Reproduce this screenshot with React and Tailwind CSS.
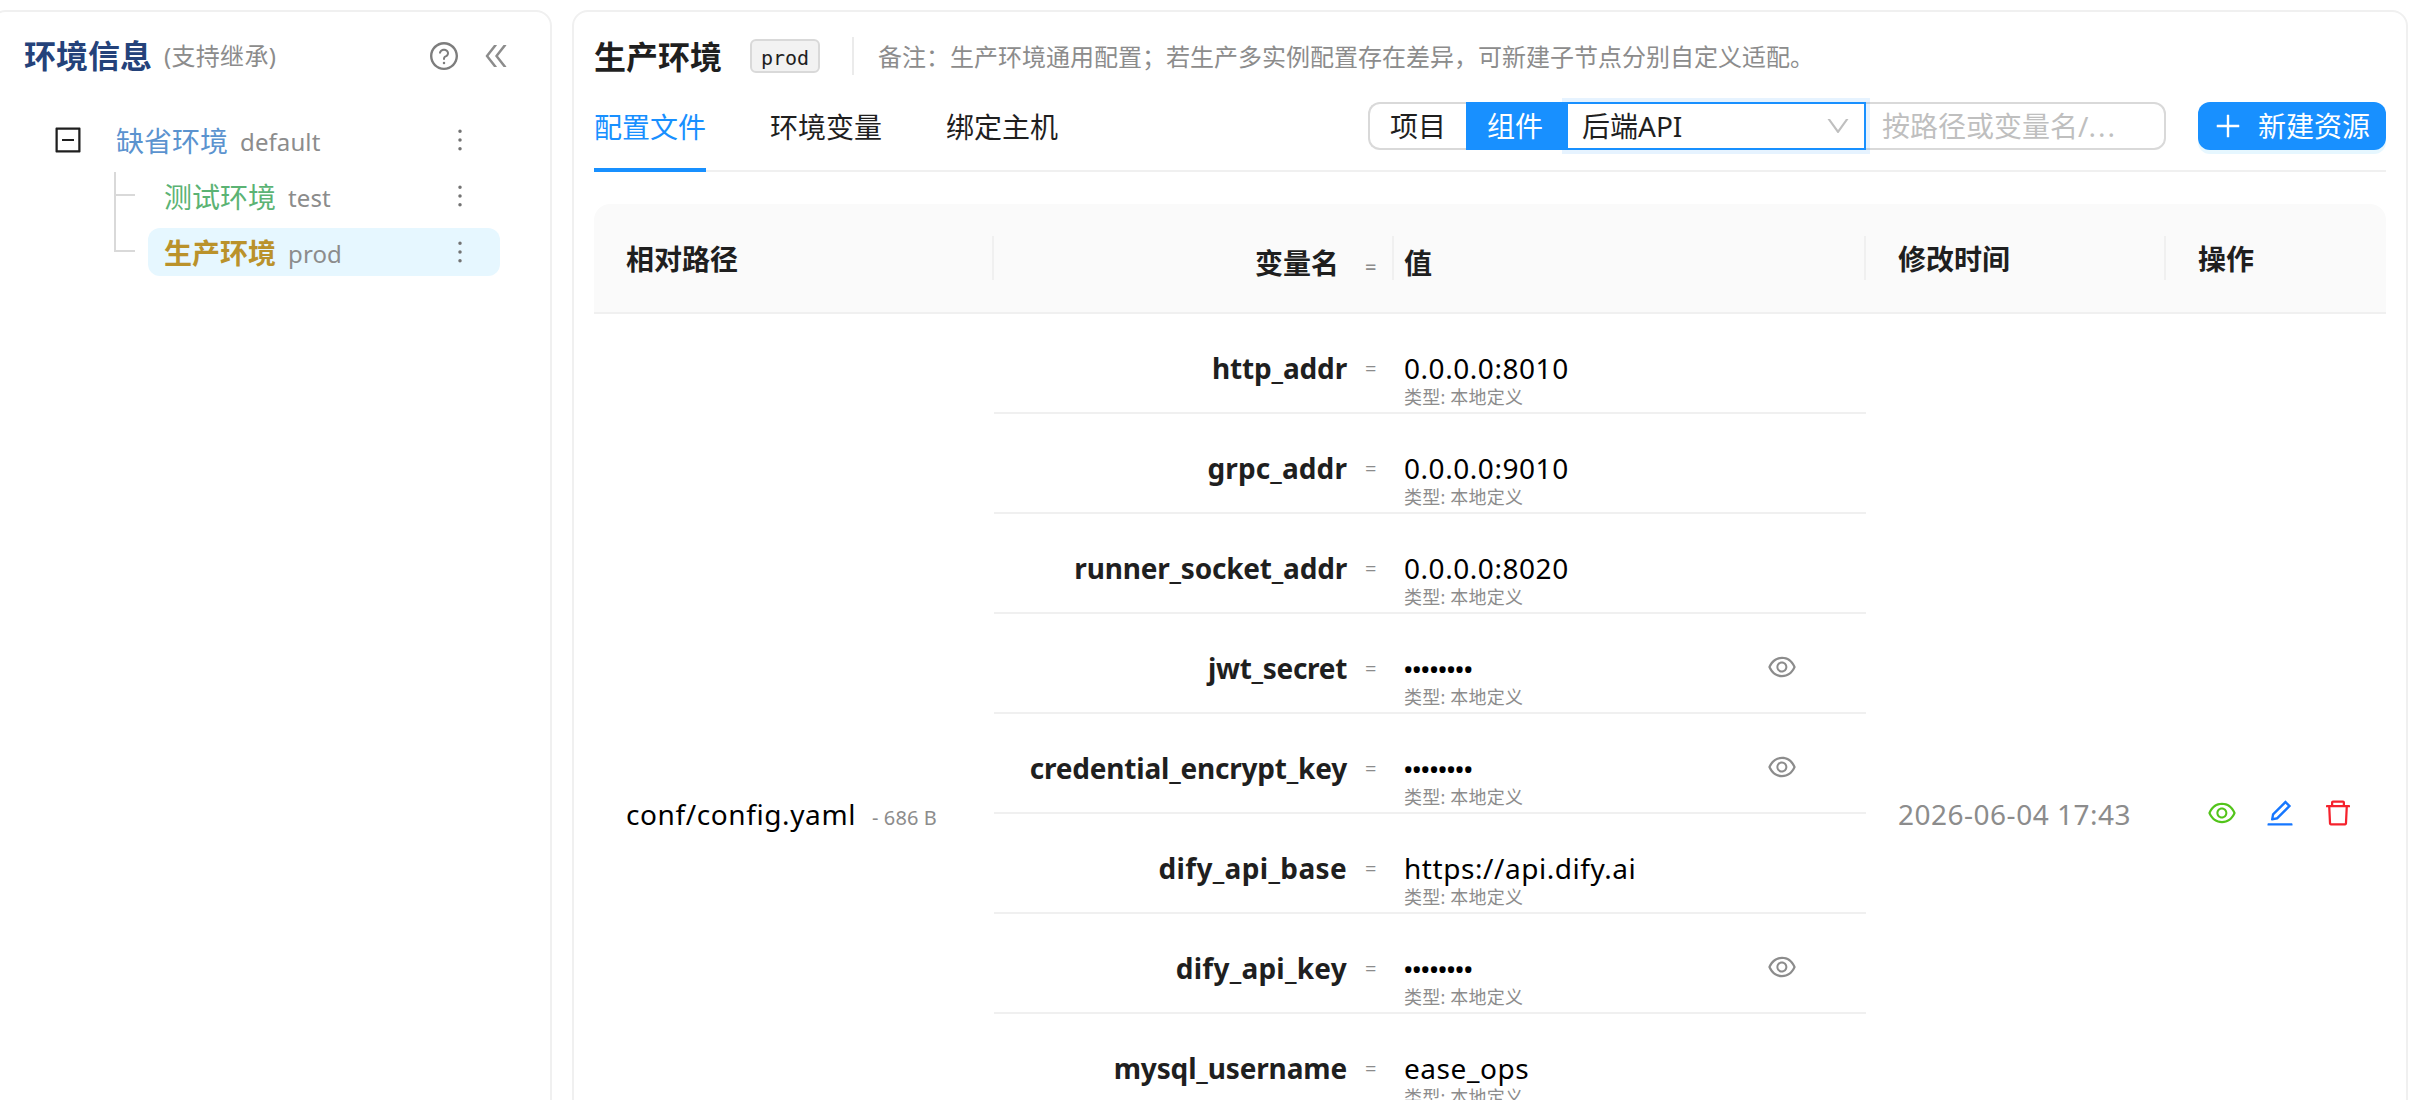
import React from 'react';
import {
  AiOutlineQuestionCircle,
  AiOutlineDoubleLeft,
  AiOutlineMinusSquare,
  AiOutlineMore,
  AiOutlineDown,
  AiOutlinePlus,
  AiOutlineEye,
  AiOutlineEdit,
  AiOutlineDelete,
} from 'react-icons/ai';

const variables = [
  { name: 'http_addr', value: '0.0.0.0:8010', tracking: 'tracking-[-0.15px]' },
  { name: 'grpc_addr', value: '0.0.0.0:9010', tracking: 'tracking-[0.1px]' },
  { name: 'runner_socket_addr', value: '0.0.0.0:8020', tracking: 'tracking-[-0.2px]' },
  { name: 'jwt_secret', secret: true, tracking: 'tracking-[-0.3px]' },
  { name: 'credential_encrypt_key', secret: true, tracking: 'tracking-[-0.2px]' },
  { name: 'dify_api_base', value: 'https://api.dify.ai', tracking: 'tracking-[0.35px]' },
  { name: 'dify_api_key', secret: true, tracking: 'tracking-[0.25px]' },
  { name: 'mysql_username', value: 'ease_ops', tracking: 'tracking-[-0.15px]' },
];

function TreeItem({ label, code, labelClass, rowClass }) {
  return (
    <div className={`flex h-12 items-center rounded-xl pr-6 ${rowClass}`}>
      <span className={`pt-0.5 text-[28px] leading-[44px] ${labelClass}`}>{label}</span>
      <span className="ml-3 pt-1 text-2xl leading-[44px] tracking-[0.1px] text-[#8c8c8c]">{code}</span>
      <AiOutlineMore className="ml-auto size-8 text-[#737373]" />
    </div>
  );
}

function Sidebar() {
  return (
    <aside className="-ml-2.5 h-[1200px] w-[562px] shrink-0 rounded-2xl border-2 border-[#f0f0f0] bg-white pl-8">
      <header className="mt-5 flex h-12 items-center pr-[38px]">
        <h2 className="text-[32px] leading-12 font-bold text-[#24427a]">环境信息</h2>
        <span className="ml-3 text-2xl tracking-[0.3px] text-[#8c8c8c]">(支持继承)</span>
        <AiOutlineQuestionCircle className="ml-auto size-8 text-[#7d7d7d]" />
        <AiOutlineDoubleLeft className="ml-5 size-8 text-[#8c8c8c]" />
      </header>
      <div className="mt-9 mr-[50px] pl-7">
        <div className="flex items-center">
          <AiOutlineMinusSquare className="size-8 shrink-0 text-[#1f1f1f]" />
          <div className="ml-5 flex-1">
            <TreeItem label="缺省环境" code="default" labelClass="text-[#5b93cf]" rowClass="pl-3" />
          </div>
        </div>
        <div className="mt-2 flex pl-[62px]">
          <div className="flex h-[80px] w-[34px] shrink-0 flex-col">
            <div className="h-6 w-[21px] border-b-2 border-l-2 border-[#d9d9d9]" />
            <div className="h-14 w-[21px] border-b-2 border-l-2 border-[#d9d9d9]" />
          </div>
          <div className="flex flex-1 flex-col gap-2">
            <TreeItem label="测试环境" code="test" labelClass="text-[#5bb374]" rowClass="pl-4" />
            <TreeItem label="生产环境" code="prod" labelClass="font-bold text-[#ba922b]" rowClass="bg-[#e6f7ff] pl-4" />
          </div>
        </div>
      </div>
    </aside>
  );
}

function Toolbar() {
  return (
    <div className="flex h-12 items-stretch text-[28px] leading-[45px]">
      <button className="w-[98px] rounded-l-xl border-2 border-r-0 border-[#d9d9d9] bg-white px-0.5">项目</button>
      <button className="z-20 w-[102px] bg-[#1890ff] pr-1 text-white">组件</button>
      <div className="z-10 -ml-0.5 flex w-[300px] items-center justify-between border-2 border-[#1890ff] bg-white pr-3 pl-3.5 shadow-[0_0_0_4px_rgba(24,144,255,0.11)]">
        <span>后端API</span>
        <AiOutlineDown className="size-7 text-[#bfbfbf]" />
      </div>
      <div className="-ml-0.5 w-[302px] rounded-r-xl border-2 border-[#d9d9d9] bg-white pl-4 text-[#bfbfbf]">
        按路径或变量名/<span className="tracking-[2px]">...</span>
      </div>
      <button className="ml-8 flex w-[188px] items-center rounded-xl bg-[#1890ff] pl-3.5 text-white shadow-[0_4px_0_#e6f7ff]">
        <AiOutlinePlus className="size-8" />
        <span className="ml-3.5">新建资源</span>
      </button>
    </div>
  );
}

function HeadCell({ children, last, className = '' }) {
  return (
    <div className="flex h-full items-center">
      <div className={`flex-1 ${className}`}>{children}</div>
      {!last && <div className="h-11 w-0.5 bg-[#f0f0f0]" />}
    </div>
  );
}

function VariableRow({ name, value, secret, tracking }) {
  return (
    <div className="flex h-[100px] border-b-2 border-[#f0f0f0] pt-8">
      <div className={`w-[353px] text-right text-[28px] leading-[44px] font-bold text-[#1f1f1f] ${tracking}`}>{name}</div>
      <div className="w-[57px] pl-[18px] text-xl leading-[46px] text-[#8c8c8c]">=</div>
      <div className="flex-1">
        <div className="h-[39px] text-[28px] leading-[44px] tracking-[0.55px] text-black">
          {secret ? <span className="-ml-px inline-block pt-px tracking-[-1.97px]">••••••••</span> : value}
        </div>
        <div className="text-lg leading-6 tracking-[0.2px] text-[#8c8c8c]">类型: 本地定义</div>
      </div>
      {secret && <AiOutlineEye className="mt-[5px] mr-[68px] size-8 text-[#8c8c8c]" />}
    </div>
  );
}

const columns = 'grid grid-cols-[400px_400px_472px_300px_220px]';

export default function App() {
  return (
    <div className="flex h-[1100px] w-[2410px] gap-5 overflow-hidden bg-white pt-2.5 font-['Noto_Sans','Noto_Sans_CJK_SC',sans-serif] text-[#1f1f1f]">
      <Sidebar />
      <main className="h-[1200px] w-[1836px] shrink-0 rounded-2xl border-2 border-[#f0f0f0] bg-white px-5">
        <header className="mt-5 flex h-12 items-center">
          <h1 className="pt-0.5 text-[32px] leading-12 font-bold">生产环境</h1>
          <code className="ml-7 flex h-[34px] w-[70px] items-center justify-center rounded-md border-2 border-[#d9d9d9] bg-[#f2f2f2] pt-[3px] font-['DejaVu_Sans_Mono',monospace] text-xl leading-none">prod</code>
          <div className="ml-8 h-[38px] w-0.5 bg-[#ebebeb]" />
          <p className="ml-6 pt-0.5 text-2xl text-[#8c8c8c]">备注：生产环境通用配置；若生产多实例配置存在差异，可新建子节点分别自定义适配。</p>
        </header>
        <nav className="flex h-[92px] items-stretch border-b-2 border-[#f0f0f0] pt-4">
          <div className="-mb-0.5 flex gap-16 text-[28px] leading-[62px]">
            <div className="border-b-4 border-[#1890ff] text-[#1890ff]">配置文件</div>
            <div>环境变量</div>
            <div>绑定主机</div>
          </div>
          <div className="ml-auto pt-1.5">
            <Toolbar />
          </div>
        </nav>
        <section className="mt-8">
          <div className={`${columns} h-[110px] items-center rounded-t-2xl border-b-2 border-[#f0f0f0] bg-[#fafafa] text-[28px] leading-[44px] font-bold`}>
            <HeadCell className="pt-px pl-8">相对路径</HeadCell>
            <HeadCell className="flex items-baseline pt-[9px]">
              <span className="w-[345px] text-right">变量名</span>
              <span className="pl-[26px] text-xl font-medium text-[#8c8c8c]">=</span>
            </HeadCell>
            <HeadCell className="pt-[9px] pl-2.5">值</HeadCell>
            <HeadCell className="pt-px pl-8">修改时间</HeadCell>
            <HeadCell className="pt-px pl-8" last>操作</HeadCell>
          </div>
          <div className="grid grid-cols-[400px_872px_300px_220px]">
            <div className="flex h-[1000px] items-center pl-8 text-[28px] tracking-[0.6px] text-black">
              <div>
                conf/config.yaml<span className="ml-4 text-xl tracking-[0.1px] text-[#8c8c8c]">- 686 B</span>
              </div>
            </div>
            <div>
              {variables.map((v) => (
                <VariableRow key={v.name} {...v} />
              ))}
            </div>
            <div className="flex h-[1000px] items-center pl-8 text-[28px] tracking-[0.5px] text-[#8c8c8c]">2026-06-04 17:43</div>
            <div className="flex h-[1000px] items-center gap-[26px] pb-0.5 pl-10">
              <AiOutlineEye className="size-8 text-[#52c41a]" />
              <AiOutlineEdit className="size-8 text-[#1677ff]" />
              <AiOutlineDelete className="size-8 text-[#f5222d]" />
            </div>
          </div>
        </section>
      </main>
    </div>
  );
}
